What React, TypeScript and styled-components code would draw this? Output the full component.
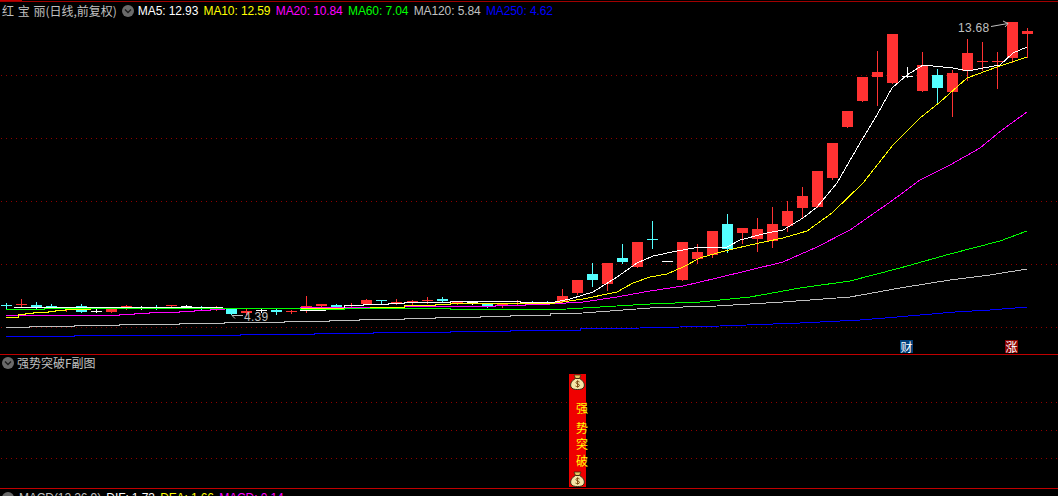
import styled, { createGlobalStyle } from "styled-components";

const RED = "#ff3232";
const CYAN = "#54ffff";
const WHITE = "#ffffff";

const GlobalStyle = createGlobalStyle`
    html, body {
        margin: 0;
        padding: 0;
        background: #000;
        overflow: hidden;
    }
`;

const Screen = styled.div`
    display: flex;
    flex-direction: column;
    width: 1058px;
    height: 496px;
    overflow: hidden;
    background: #000;
    font-family: "Liberation Sans", "Noto Sans CJK SC", sans-serif;
    font-size: 12px;
    color: #c0c0c0;
`;

const Panel = styled.section<{ $height: number }>`
    position: relative;
    flex: 0 0 ${(p) => p.$height}px;
    box-sizing: border-box;
    border-bottom: 1px solid #c00000;
`;

const TopTab = styled.div`
    position: absolute;
    top: 0;
    left: 0;
    width: 22px;
    height: 1px;
    background: #c00000;
`;

const TopRule = styled.div`
    position: absolute;
    top: 1px;
    left: 0;
    right: 0;
    height: 1px;
    background: #a00000;
`;

const ChartSvg = styled.svg`
    position: absolute;
    top: 0;
    left: 0;
    display: block;
`;

const Legend = styled.div<{ $top: number; $left: number }>`
    position: relative;
    display: flex;
    align-items: center;
    height: 14px;
    padding: ${(p) => p.$top}px 0 0 ${(p) => p.$left}px;
    white-space: nowrap;
    line-height: 14px;
`;

const Title = styled.span<{ $wordGap?: number }>`
    font-family: "Noto Sans CJK SC", "Liberation Sans", sans-serif;
    color: #c0c0c0;
    word-spacing: ${(p) => p.$wordGap ?? 0}px;
`;

const Collapse = styled.svg<{ $gap: number; $before?: number }>`
    flex: none;
    margin: 0 ${(p) => p.$gap}px 0 ${(p) => p.$before ?? 0}px;
`;

const Value = styled.span<{ $color: string }>`
    color: ${(p) => p.$color};
    margin-right: 5.3px;
    letter-spacing: -0.1px;
`;

const PriceTag = styled.span<{ $x: number; $y: number }>`
    position: absolute;
    left: ${(p) => p.$x}px;
    top: ${(p) => p.$y}px;
    line-height: 14px;
    letter-spacing: 0.3px;
    color: #c0c0c0;
`;

const Badge = styled.span<{ $x: number; $bg: string }>`
    position: absolute;
    left: ${(p) => p.$x}px;
    top: 340px;
    width: 13px;
    height: 13px;
    display: flex;
    align-items: center;
    justify-content: center;
    background: ${(p) => p.$bg};
    color: #fff;
    font-family: "Noto Sans CJK SC", sans-serif;
    font-size: 12px;
    line-height: 13px;
`;

const Signal = styled.div`
    position: absolute;
    left: 569px;
    top: 19px;
    width: 17px;
    height: 113px;
    display: flex;
    flex-direction: column;
    background: #f00000;
`;

const SignalBag = styled.svg<{ $push?: boolean }>`
    flex: none;
    display: block;
    margin-top: ${(p) => (p.$push ? "auto" : "0")};
`;

const SignalChar = styled.span<{ $gap: number }>`
    flex: none;
    align-self: flex-start;
    margin: ${(p) => p.$gap}px 0 0 7px;
    color: #ffff00;
    font-family: "Noto Sans CJK SC", sans-serif;
    font-size: 12px;
    line-height: 13px;
`;

// left, body top, body bottom, wick top, wick bottom, colour
type Candle = [number, number, number, number, number, string];

const candles: Candle[] = [
    [1, 305, 305, 303, 308, CYAN],
    [16, 304, 304, 299, 306, RED],
    [31, 305, 308, 302, 309, CYAN],
    [46, 306, 308, 304, 308, CYAN],
    [61, 308, 308, 307, 311, RED],
    [76, 306, 312, 304, 312, CYAN],
    [91, 311, 311, 309, 312, WHITE],
    [106, 309, 312, 309, 312, RED],
    [121, 306, 308, 305, 309, RED],
    [136, 307, 308, 306, 309, WHITE],
    [151, 307, 308, 305, 309, CYAN],
    [166, 305, 306, 305, 307, RED],
    [181, 306, 307, 305, 308, WHITE],
    [196, 307, 308, 306, 309, CYAN],
    [211, 307, 308, 306, 310, RED],
    [226, 309, 314, 308, 314, CYAN],
    [241, 311, 313, 309, 314, RED],
    [256, 310, 311, 309, 312, WHITE],
    [271, 310, 312, 309, 314, CYAN],
    [286, 311, 312, 310, 313, RED],
    [301, 306, 311, 296, 312, RED],
    [316, 304, 306, 304, 307, RED],
    [331, 305, 307, 304, 308, CYAN],
    [346, 305, 306, 303, 307, RED],
    [361, 300, 304, 299, 304, RED],
    [376, 300, 300, 300, 304, CYAN],
    [391, 302, 303, 299, 304, RED],
    [407, 301, 302, 300, 304, RED],
    [422, 300, 301, 297, 303, RED],
    [437, 299, 301, 297, 302, CYAN],
    [452, 302, 303, 301, 304, RED],
    [467, 302, 302, 301, 304, WHITE],
    [482, 304, 306, 304, 307, CYAN],
    [497, 304, 305, 304, 307, RED],
    [512, 303, 304, 300, 304, RED],
    [527, 302, 303, 301, 304, CYAN],
    [542, 302, 303, 301, 304, CYAN],
    [557, 296, 302, 289, 303, RED],
    [572, 280, 293, 280, 294, RED],
    [587, 274, 280, 263, 286, CYAN],
    [602, 263, 284, 263, 290, RED],
    [617, 258, 262, 244, 263, CYAN],
    [632, 242, 267, 242, 267, RED],
    [647, 239, 239, 221, 248, CYAN],
    [662, 261, 261, 261, 261, WHITE],
    [677, 242, 280, 242, 280, RED],
    [692, 252, 259, 244, 263, RED],
    [707, 231, 255, 231, 257, RED],
    [722, 224, 249, 214, 252, CYAN],
    [737, 228, 233, 228, 243, RED],
    [752, 229, 239, 218, 251, RED],
    [767, 224, 241, 207, 247, RED],
    [782, 211, 226, 201, 231, RED],
    [797, 196, 208, 187, 217, RED],
    [812, 171, 207, 171, 207, RED],
    [827, 143, 178, 143, 179, RED],
    [842, 111, 127, 111, 127, RED],
    [857, 77, 101, 77, 101, RED],
    [872, 72, 77, 51, 105, RED],
    [887, 34, 83, 34, 83, RED],
    [902, 76, 76, 67, 77, WHITE],
    [917, 65, 91, 52, 91, RED],
    [932, 75, 88, 69, 104, CYAN],
    [947, 73, 92, 70, 116, RED],
    [962, 53, 71, 39, 80, RED],
    [977, 61, 61, 42, 70, RED],
    [992, 61, 61, 52, 88, RED],
    [1007, 22, 58, 22, 62, RED],
    [1022, 31, 34, 28, 57, RED],
];

type Pt = [number, number];

// flat levels from the left, each y held until the next x
const steps = (pts: Pt[]): Pt[] =>
    pts.flatMap(([x, y], i) => (i < pts.length - 1 ? ([[x, y], [pts[i + 1][0], y]] as Pt[]) : ([[x, y]] as Pt[])));

const toPoints = (pts: Pt[]) => pts.map(([x, y]) => `${x},${y}`).join(" ");

const ma250: Pt[] = [
    ...steps([[6, 336], [74, 335], [240, 334], [314, 333], [373, 332], [450, 331], [510, 330], [580, 329]]),
    [640, 328], [720, 326], [800, 323], [860, 320], [885, 318], [920, 315], [955, 312], [990, 310], [1027, 307],
];

const ma120: Pt[] = [
    ...steps([[6, 327], [29, 326], [74, 325], [119, 324], [179, 323], [224, 322], [284, 321], [329, 320], [359, 319], [404, 318], [435, 317], [480, 316], [510, 315], [550, 314]]),
    [583, 313], [650, 308], [717, 306], [783, 302], [850, 297], [900, 288], [950, 280], [990, 275], [1027, 269],
];

const ma60: Pt[] = [
    ...steps([[6, 309], [44, 308], [300, 309], [344, 308], [450, 309], [550, 310]]),
    [600, 307], [650, 304], [700, 302], [750, 297], [800, 288], [850, 281], [900, 268], [950, 254], [1000, 241], [1027, 231],
];

const ma20: Pt[] = [
    ...steps([[6, 315], [119, 314], [134, 313], [149, 312], [179, 311], [194, 310], [210, 309], [224, 308], [300, 307], [404, 306], [495, 305], [525, 304]]),
    [550, 304], [583, 302], [617, 297], [650, 291], [683, 286], [717, 278], [750, 270], [783, 262], [817, 247], [850, 230], [893, 200], [920, 180], [950, 165], [980, 148], [1002, 130], [1027, 112],
];

const ma10: Pt[] = [
    ...steps([[6, 317], [18, 314], [25, 313], [33, 312], [48, 311], [55, 310], [65, 309], [90, 308], [300, 308], [370, 307], [404, 305], [435, 304], [450, 303]]),
    [555, 303], [583, 299], [617, 292], [633, 283], [650, 277], [667, 274], [683, 267], [700, 258], [717, 253], [733, 249], [750, 245], [783, 238], [807, 231], [832, 213], [863, 183], [893, 145], [920, 118], [940, 102], [967, 78], [997, 67], [1027, 57],
];

const ma5: Pt[] = [
    ...steps([[14, 307], [90, 307], [222, 308], [300, 310], [325, 308], [344, 305], [363, 304], [388, 303], [404, 302], [450, 301], [520, 302]]),
    [550, 303], [570, 299], [593, 292], [617, 277], [637, 263], [653, 256], [677, 251], [700, 247], [727, 247], [740, 240], [767, 233], [783, 230], [803, 218], [817, 207], [837, 183], [860, 143], [877, 115], [892, 88], [907, 75], [923, 65], [953, 68], [968, 71], [983, 68], [1000, 65], [1013, 53], [1027, 47],
];

const maLines: { points: Pt[]; color: string }[] = [
    { points: ma250, color: "#0000ff" },
    { points: ma120, color: "#c0c0c0" },
    { points: ma20, color: "#ff00ff" },
    { points: ma5, color: "#ffffff" },
    { points: ma10, color: "#ffff00" },
    { points: ma60, color: "#00ff00" },
];

const legend = [
    { text: "MA5: 12.93", color: "#ffffff" },
    { text: "MA10: 12.59", color: "#ffff00" },
    { text: "MA20: 10.84", color: "#ff00ff" },
    { text: "MA60: 7.04", color: "#00ff00" },
    { text: "MA120: 5.84", color: "#c0c0c0" },
    { text: "MA250: 4.62", color: "#0000ff" },
];

const macd = [
    { text: "MACD(12,26,9)", color: "#c0c0c0" },
    { text: "DIF: 1.73", color: "#ffffff" },
    { text: "DEA: 1.66", color: "#ffff00" },
    { text: "MACD: 0.14", color: "#ff00ff" },
];

function GridLines({ rows, height }: { rows: number[]; height: number }) {
    return (
        <ChartSvg width={1058} height={height}>
            {rows.map((y) => (
                <line key={y} x1={1} x2={1058} y1={y + 0.5} y2={y + 0.5} stroke="#900000" strokeDasharray="1 4" />
            ))}
        </ChartSvg>
    );
}

function CollapseIcon({ gap, before }: { gap: number; before?: number }) {
    return (
        <Collapse width={12} height={12} viewBox="0 0 12 12" $gap={gap} $before={before}>
            <circle cx={6} cy={6} r={6} fill="#6a6a6a" />
            <path d="M3 4.5 L6 7.5 L9 4.5" fill="none" stroke="#1c1c1c" strokeWidth={1.4} />
        </Collapse>
    );
}

function MoneyBag({ push }: { push?: boolean }) {
    return (
        <SignalBag $push={push} width={17} height={16} viewBox="0 0 17 16">
            <path d="M5 1 L12 1 L10.5 4.5 L6.5 4.5 Z" fill="#e8c860" stroke="#3a2a10" strokeWidth={0.8} />
            <path d="M6.5 4.5 L10.5 4.5 C15 7 16 10.5 15 13 C14 15 11.5 15.5 8.5 15.5 C5.5 15.5 3 15 2 13 C1 10.5 2 7 6.5 4.5 Z" fill="#f4e6a8" stroke="#3a2a10" strokeWidth={1} />
            <path d="M10.5 8 C9.5 7 7 7 7 8.6 C7 10.4 10.5 9.6 10.5 11.4 C10.5 13 7.6 13 6.5 12 M8.6 6.4 L8.6 13.6" fill="none" stroke="#7a4a10" strokeWidth={1} />
        </SignalBag>
    );
}

export default function App() {
    return (
        <Screen>
            <GlobalStyle />
            <Panel $height={355}>
                <TopTab />
                <TopRule />
                <ChartSvg width={1058} height={354}>
                    {[75, 138, 201, 264, 327].map((y) => (
                        <line key={y} x1={1} x2={1058} y1={y + 0.5} y2={y + 0.5} stroke="#900000" strokeDasharray="1 4" />
                    ))}
                    <g shapeRendering="crispEdges">
                        {candles.map(([left, top, bottom, wickTop, wickBottom, color]) => (
                            <g key={left} fill={color}>
                                <rect x={left + 5} y={wickTop} width={1} height={wickBottom - wickTop + 1} />
                                <rect x={left} y={top} width={11} height={Math.max(bottom - top, 1)} />
                            </g>
                        ))}
                        {maLines.map((line) => (
                            <polyline key={line.color} points={toPoints(line.points)} fill="none" stroke={line.color} strokeWidth={1} />
                        ))}
                    </g>
                    <path d="M991 26.5 L1008 23.5 M1003 21 L1008 23.5 L1005 27" fill="none" stroke="#c0c0c0" />
                    <path d="M232 315.5 L243 315.5 M232 315.5 L235 318.5" fill="none" stroke="#c0c0c0" />
                </ChartSvg>
                <Legend $top={4} $left={2}>
                    <Title $wordGap={1}>红 宝 丽(日线,前复权)</Title>
                    <CollapseIcon before={5} gap={4} />
                    {legend.map((item) => (
                        <Value key={item.text} $color={item.color}>{item.text}</Value>
                    ))}
                </Legend>
                <PriceTag $x={958} $y={21}>13.68</PriceTag>
                <PriceTag $x={244} $y={310}>4.39</PriceTag>
                <Badge $x={900} $bg="#00407a">财</Badge>
                <Badge $x={1005} $bg="#8a0000">涨</Badge>
            </Panel>
            <Panel $height={134}>
                <GridLines rows={[47, 75, 103]} height={133} />
                <Legend $top={1} $left={2}>
                    <CollapseIcon gap={3} />
                    <Title>强势突破F副图</Title>
                </Legend>
                <Signal>
                    <MoneyBag />
                    <SignalChar $gap={11}>强</SignalChar>
                    <SignalChar $gap={7}>势</SignalChar>
                    <SignalChar $gap={3}>突</SignalChar>
                    <SignalChar $gap={4}>破</SignalChar>
                    <MoneyBag push />
                </Signal>
            </Panel>
            <Legend $top={2} $left={2}>
                <CollapseIcon gap={5} />
                {macd.map((item) => (
                    <Value key={item.text} $color={item.color}>{item.text}</Value>
                ))}
            </Legend>
        </Screen>
    );
}
